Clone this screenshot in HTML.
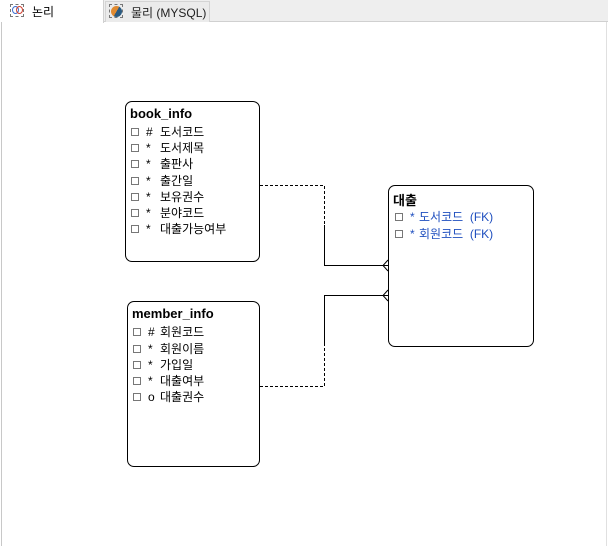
<!DOCTYPE html>
<html><head><meta charset="utf-8"><style>
*{margin:0;padding:0;box-sizing:border-box}
body{width:608px;height:546px;background:#fff;position:relative;overflow:hidden;font-family:"Liberation Sans","Noto Sans CJK KR",sans-serif;font-size:12px;color:#000}
.abs{position:absolute}
.box{position:absolute;border:1px solid #000;border-radius:7px;background:#fff}
.t{position:absolute;font-weight:bold;font-size:13px;white-space:nowrap}
.r{position:absolute;white-space:nowrap;height:16px;line-height:16px}
.cb{position:absolute;width:8px;height:8px;border:1px solid #777;top:4px;left:0}
.s{position:absolute;left:15px}
.x{position:absolute;left:29px}
.blue{color:#1f4fbf}
</style></head><body>
<div class="abs" style="left:0;top:0;width:608px;height:22px;background:#eeeeee;border-bottom:1px solid #d0d0d0"></div>
<div class="abs" style="left:0;top:0;width:104px;height:23px;background:#fff;border-right:1px solid #d0d0d0"></div>
<div class="abs" style="left:105px;top:1px;width:105px;height:21px;background:#ebebeb;border:1px solid #d4d4d4;border-bottom:none"></div>
<div class="abs" style="left:1px;top:22px;width:1px;height:524px;background:#c8c8c8"></div>
<div class="abs" style="left:606px;top:22px;width:1px;height:524px;background:#e0e0e0"></div>
<div class="abs" style="left:10px;top:4px;width:14px;height:13px;border:1px dashed #777"></div>
<div class="abs" style="left:12px;top:6px;width:7px;height:8px;border:1.5px solid #3a6fd0;border-radius:50%"></div>
<div class="abs" style="left:16px;top:6px;width:7px;height:8px;border:1.5px solid #d04030;border-radius:50%"></div>
<div class="abs" style="left:32px;top:3px;font-size:12px">논리</div>
<div class="abs" style="left:109px;top:4px;width:14px;height:14px;border:1px dashed #777"></div>
<div class="abs" style="left:111px;top:6px;width:11px;height:11px;border-radius:50%;background:linear-gradient(120deg,#e08a30 50%,#2a5a80 50%)"></div>
<div class="abs" style="left:131px;top:4px;font-size:12px;color:#222">물리 (MYSQL)</div>

<svg class="abs" style="left:0;top:0" width="608" height="546">
<g fill="none" stroke="#000" stroke-width="1">
<path d="M260 185.5H324.5V225" stroke-dasharray="3,2"/>
<path d="M324.5 225V265.5H388"/>
<path d="M388 260L383 265.5L388 271" />
<path d="M260 386.5H324.5V345" stroke-dasharray="3,2"/>
<path d="M324.5 345V295.5H388"/>
<path d="M388 290L383 295.5L388 301"/>
</g>
</svg>

<div class="box" style="left:125px;top:101px;width:135px;height:161px"></div>
<div class="t" style="left:130px;top:106px">book_info</div>
<div class="r" style="left:131px;top:124px"><i class="cb"></i><span class="s">#</span><span class="x">도서코드</span></div>
<div class="r" style="left:131px;top:140px"><i class="cb"></i><span class="s">*</span><span class="x">도서제목</span></div>
<div class="r" style="left:131px;top:156px"><i class="cb"></i><span class="s">*</span><span class="x">출판사</span></div>
<div class="r" style="left:131px;top:173px"><i class="cb"></i><span class="s">*</span><span class="x">출간일</span></div>
<div class="r" style="left:131px;top:189px"><i class="cb"></i><span class="s">*</span><span class="x">보유권수</span></div>
<div class="r" style="left:131px;top:205px"><i class="cb"></i><span class="s">*</span><span class="x">분야코드</span></div>
<div class="r" style="left:131px;top:221px"><i class="cb"></i><span class="s">*</span><span class="x">대출가능여부</span></div>

<div class="box" style="left:127px;top:301px;width:133px;height:166px"></div>
<div class="t" style="left:132px;top:306px">member_info</div>
<div class="r" style="left:133px;top:324px"><i class="cb"></i><span class="s">#</span><span class="x" style="left:27px">회원코드</span></div>
<div class="r" style="left:133px;top:341px"><i class="cb"></i><span class="s">*</span><span class="x" style="left:27px">회원이름</span></div>
<div class="r" style="left:133px;top:357px"><i class="cb"></i><span class="s">*</span><span class="x" style="left:27px">가입일</span></div>
<div class="r" style="left:133px;top:373px"><i class="cb"></i><span class="s">*</span><span class="x" style="left:27px">대출여부</span></div>
<div class="r" style="left:133px;top:389px"><i class="cb"></i><span class="s">o</span><span class="x" style="left:27px">대출권수</span></div>

<div class="box" style="left:388px;top:185px;width:146px;height:162px"></div>
<div class="t" style="left:393px;top:190px">대출</div>
<div class="r blue" style="left:395px;top:209px"><i class="cb"></i><span class="s">*</span><span class="x" style="left:24px">도서코드 &nbsp;(FK)</span></div>
<div class="r blue" style="left:395px;top:226px"><i class="cb"></i><span class="s">*</span><span class="x" style="left:24px">회원코드 &nbsp;(FK)</span></div>
</body></html>
